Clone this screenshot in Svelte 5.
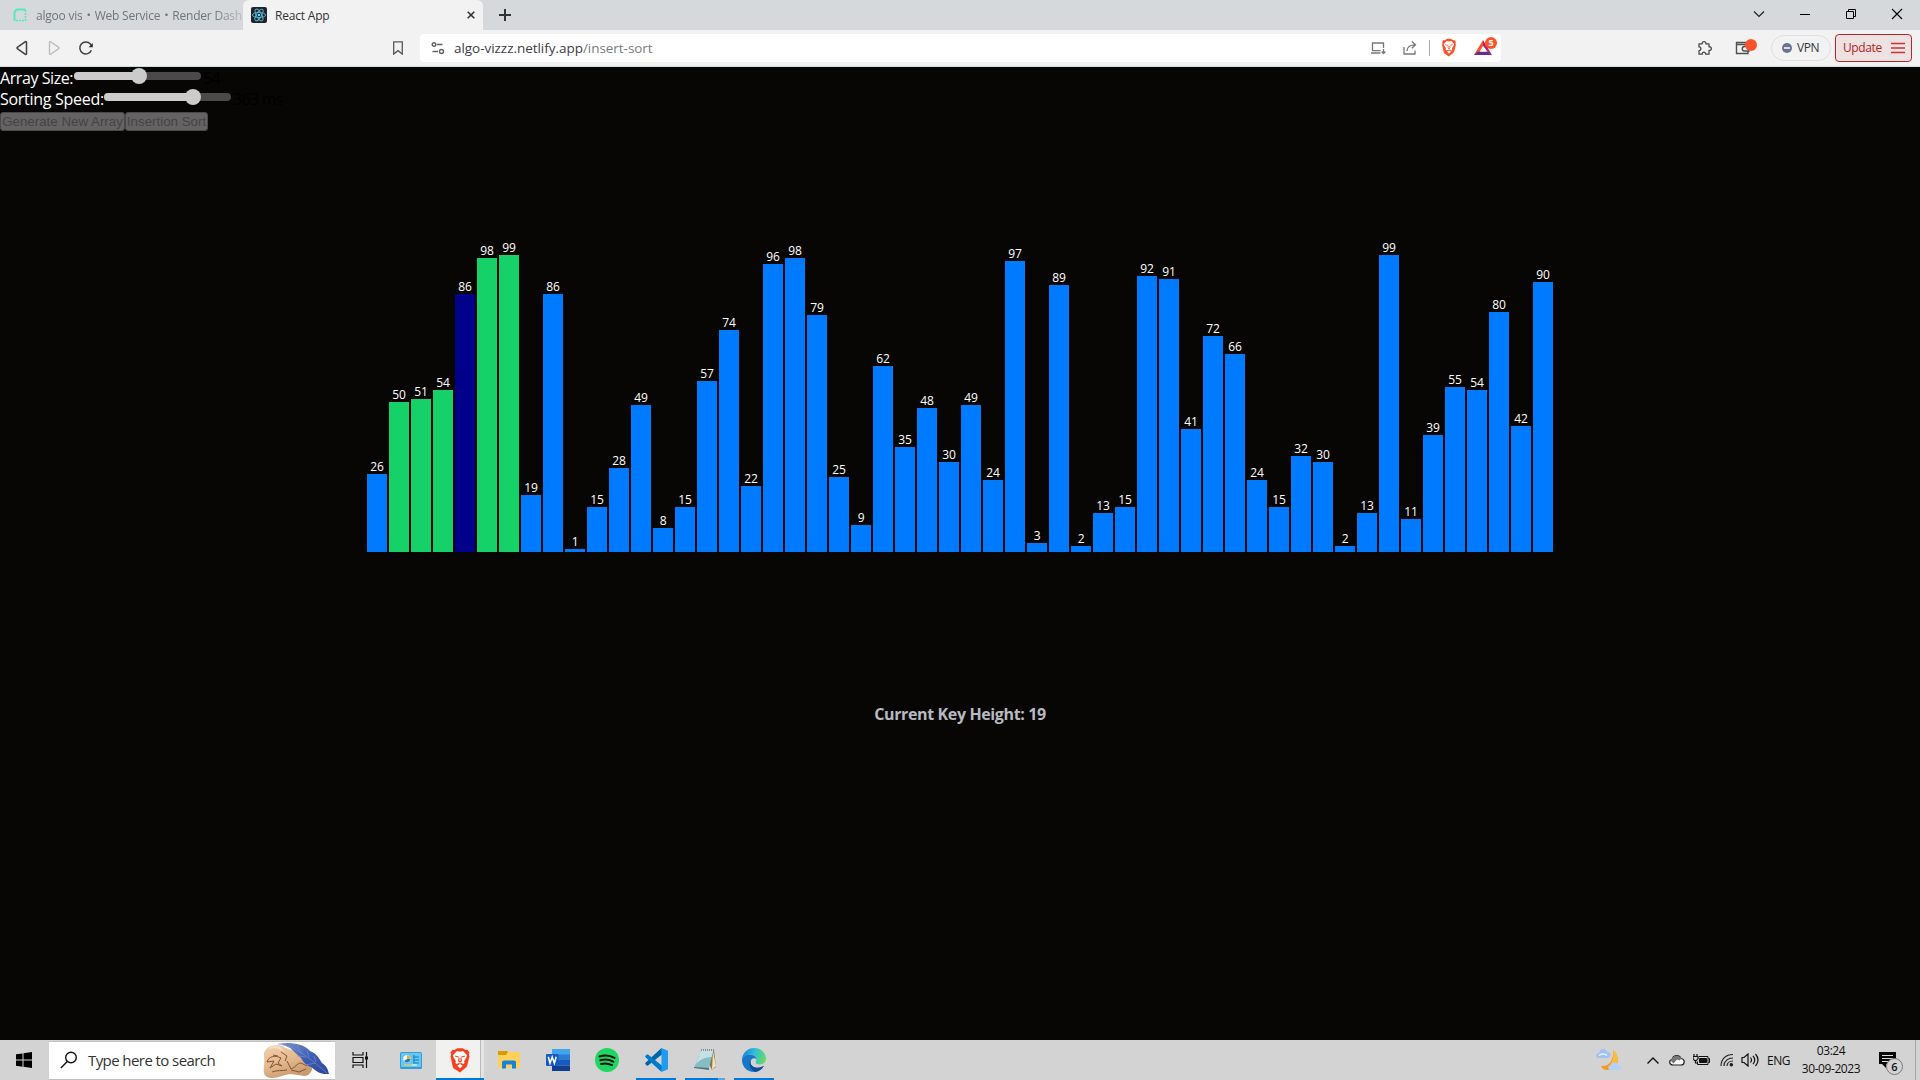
<script>
  const values = [
    26, 50, 51, 54, 86, 98, 99, 19, 86, 1, 15, 28, 49, 8, 15, 57, 74, 22, 96, 98,
    79, 25, 9, 62, 35, 48, 30, 49, 24, 97, 3, 89, 2, 13, 15, 92, 91, 41, 72, 66,
    24, 15, 32, 30, 2, 13, 99, 11, 39, 55, 54, 80, 42, 90
  ];
  const current = 4;
  const sorted = [1, 2, 3, 5, 6];
  const state = (i) => (i === current ? 'current' : sorted.includes(i) ? 'sorted' : '');
</script>

{#snippet lion()}
  <path d="M4 2.6 6.6 1h4.8L14 2.6l1.6-.2 1.8 2.4-.6 1.6.6 1.8-2 8.2c-.3 1-1 1.600-1.700 2.100L9 22.500l-4.700-3c-.8-.5-1.400-1.100-1.700-2.100L.6 8.200l.6-1.800-.6-1.600 1.800-2.400z" />
  <path class="face" d="M6.300 3.600 9 4.100l2.700-.5 3.500 3.600-.6 2.200-2 3 .5 1.600-1 1.100-2-1-1.100.4-1.100-.4-2 1-1-1.100.5-1.600-2-3-.6-2.200zM9 15.100l2.500 1.400L9 18.700l-2.500-2.200z" />
  <path class="mark" d="m4.700 8 3 .9M13.300 8l-3 .9M8.300 9.500l-.6 2.700L9 13.300l1.300-1.100-.6-2.700" />
{/snippet}

<div class="screen">
  <header class="tabs">
    <div class="tab idle">
      <svg class="favicon" width="14" height="14" viewBox="0 0 14 14"><path d="M1.500 13V5a3.500 3.500 0 0 1 3.500-3.500h7.500" fill="none" stroke="#55e9bd" stroke-width="2" /><path d="M12.500 2v10.500H2" fill="none" stroke="#55e9bd" stroke-width="1.600" stroke-dasharray="2 1" /></svg>
      <span class="title">algoo vis<i>・</i>Web Service<i>・</i>Render Dash</span>
    </div>
    <div class="tab active">
      <svg width="16" height="16" viewBox="0 0 16 16"><rect width="16" height="16" rx="2" fill="#20232a" /><g fill="none" stroke="#53b9d5" stroke-width=".9"><ellipse cx="8" cy="8" rx="6.600" ry="2.600" /><ellipse cx="8" cy="8" rx="6.600" ry="2.600" transform="rotate(60 8 8)" /><ellipse cx="8" cy="8" rx="6.600" ry="2.600" transform="rotate(120 8 8)" /></g><circle cx="8" cy="8" r="1.300" fill="#61dafb" /></svg>
      <span class="title">React App</span>
      <svg class="close" width="8" height="8" viewBox="0 0 8 8"><path d="m.7.7 6.600 6.600M7.300.7.7 7.300" stroke="#303436" stroke-width="1.600" /></svg>
    </div>
    <svg class="plus" width="12" height="12" viewBox="0 0 12 12"><path d="M6 0v12M0 6h12" stroke="#303436" stroke-width="2" /></svg>
    <div class="window">
      <svg width="46" height="28" viewBox="0 0 46 28" fill="none" stroke="#222"><path d="m18 11.500 5 5 5-5" stroke-width="1.200" /></svg>
      <svg width="46" height="28" viewBox="0 0 46 28" fill="none" stroke="#000"><path d="M18 14.500h10" /></svg>
      <svg width="46" height="28" viewBox="0 0 46 28" fill="none" stroke="#000"><path d="M18.500 11.500h7v7h-7zM20.500 11.500v-2h7v7h-2" /></svg>
      <svg width="46" height="28" viewBox="0 0 46 28" fill="none" stroke="#000"><path d="m18 9 10 10M28 9 18 19" stroke-width="1.200" /></svg>
    </div>
  </header>

  <div class="toolbar">
    <svg class="back" width="16" height="16" viewBox="0 0 16 16"><path d="M12.500 2.200c0-.6-.6-.9-1.100-.5L3.300 7.400c-.4.3-.4.9 0 1.200l8.100 5.700c.5.4 1.100.1 1.100-.5z" fill="none" stroke="#3e4143" stroke-width="1.500" /></svg>
    <svg class="forward" width="16" height="16" viewBox="0 0 16 16"><path d="M3.500 2.200c0-.6.6-.9 1.100-.5l8.100 5.700c.4.300.4.900 0 1.200l-8.100 5.700c-.5.400-1.100.1-1.100-.5z" fill="none" stroke="#bcbebf" stroke-width="1.400" /></svg>
    <svg class="reload" width="16" height="16" viewBox="0 0 16 16"><path d="M13.400 10.200A6 6 0 1 1 12.400 4l1 1.500" fill="none" stroke="#3e4143" stroke-width="1.500" /><path d="M14.800 3v4.300h-4.200z" fill="#303335" /></svg>
    <svg class="bookmark" width="12" height="14" viewBox="0 0 12 14"><path d="M1.700.8h8.600v12.300L6 9.700l-4.300 3.400z" fill="none" stroke="#55585a" stroke-width="1.300" /></svg>
    <div class="address">
      <svg width="14" height="14" viewBox="0 0 14 14" fill="none" stroke="#5e6265" stroke-width="1.400"><circle cx="3" cy="3.500" r="1.800" /><path d="M6 3.500h5.500M1.500 10.500H7" /><circle cx="10.500" cy="10.500" r="2" /></svg>
      <span class="url"><b>algo-vizzz.netlify.app</b>/insert-sort</span>
      <svg class="install" width="16" height="14" viewBox="0 0 16 14" fill="none" stroke="#74777a" stroke-width="1.300"><path d="M10.500 9.700H2.500V2h11v5M1 12h9.500M13.500 8v4.500M11.600 10.500l1.900 2 1.900-2" /></svg>
      <svg class="share" width="16" height="16" viewBox="0 0 16 16" fill="none" stroke="#74777a" stroke-width="1.300"><path d="M2 7v7h11v-3.500M5 11c0-4 3-6.200 8-6.200M9.800 1.500l3.700 3.300-3.700 3.500" /></svg>
      <i class="divider"></i>
      <svg class="brave" width="16" height="19" viewBox="0 0 18 23">{@render lion()}</svg>
      <div class="rewards">
        <svg width="18" height="16" viewBox="0 0 18 16"><path d="M9 0 0 15h4.500L9 6.500z" fill="#ff4f2b" /><path d="m9 0 9 15-4-3-5-6z" fill="#b12369" /><path d="m0 15 4-3.600h10L18 15z" fill="#662d91" /><path d="m9 6-3.400 5.600h6.800z" fill="#fff" /></svg>
        <span class="count">5</span>
      </div>
    </div>
    <svg class="puzzle" width="16" height="16" viewBox="0 0 16 16"><path d="M2 3.800h3.200c-.5-3 4.200-3 3.700 0H12v3c3.200-.4 3.200 4 0 3.600v3.800H8.600c.3-2.800-3.700-2.800-3.400 0H2v-3.500c2.500 0 2.500-3.800 0-3.800z" fill="none" stroke="#45484a" stroke-width="1.300" stroke-linejoin="round" /></svg>
    <div class="wallet">
      <svg width="16" height="14" viewBox="0 0 16 14" fill="none" stroke="#4d5052" stroke-width="1.400"><path d="M13 4V1.500H1.500v11H13V10M1.500 3.500h11M14 5.500H9.500a2 2 0 0 0 0 4.500H14z" /></svg>
      <span class="dot"></span>
    </div>
    <div class="vpn"><svg width="10" height="10" viewBox="0 0 10 10"><circle cx="5" cy="5" r="5" fill="#6b7094" /><path d="M2 5h6" stroke="#fff" stroke-width="1.500" /></svg><span>VPN</span></div>
    <div class="update"><span>Update</span><svg width="14" height="12" viewBox="0 0 14 12"><path d="M0 1.500h14M0 6h14M0 10.500h14" stroke="#c93437" stroke-width="1.300" /></svg></div>
  </div>

  <main>
    <div class="control"><label class="size" for="size">Array Size:</label>
      <svg id="size" width="127" height="16" viewBox="0 0 127 16"><rect y="4" width="127" height="8" rx="4" fill="#4b494a" /><rect y="4" width="70" height="8" rx="4" fill="#cbcbcb" /><circle cx="65" cy="8" r="8" fill="#cbcbcb" /></svg><span class="value">54</span></div>
    <div class="control"><label class="speed" for="speed">Sorting Speed:</label>
      <svg id="speed" width="127" height="16" viewBox="0 0 127 16"><rect y="4" width="127" height="8" rx="4" fill="#4b494a" /><rect y="4" width="93" height="8" rx="4" fill="#cbcbcb" /><circle cx="89" cy="8" r="8" fill="#cbcbcb" /></svg><span class="value">363 ms</span></div>
    <div class="buttons"><button class="generate" disabled>Generate New Array</button><button class="sort" disabled>Insertion Sort</button></div>
    <div class="chart">
      {#each values as v, i}
        <div class="item"><span>{v}</span><div class="bar {state(i)}" style:height="{v * 3}px"></div></div>
      {/each}
    </div>
    <p class="key">Current Key Height: 19</p>
  </main>

  <footer>
    <svg class="start" width="16" height="16" viewBox="0 0 16 16"><path d="M0 2.300 6.500 1.400v6.200H0zM7.500 1.200 16 0v7.600H7.500zM0 8.500h6.500v6.200L0 13.800zM7.500 8.500H16V16l-8.500-1.200z" /></svg>
    <div class="search">
      <svg width="18" height="18" viewBox="0 0 18 18" fill="none" stroke="#111" stroke-width="1.400"><circle cx="11" cy="6.500" r="5.300" /><path d="M7.300 10.400.8 17" /></svg>
      <span>Type here to search</span>
      <svg class="fossil" width="68" height="36" viewBox="0 0 68 36">
        <defs>
          <linearGradient id="sand" x2=".5" y2="1"><stop stop-color="#efcfae" /><stop offset=".5" stop-color="#e6bd92" /><stop offset="1" stop-color="#c89a6c" /></linearGradient>
          <linearGradient id="feather" x2="1" y2="1"><stop stop-color="#8392c9" /><stop offset=".5" stop-color="#3f60b8" /><stop offset="1" stop-color="#2c4797" /></linearGradient>
        </defs>
        <path d="M2 13C1 7 7 2 15 2c7 0 8 4 15 5 8 0 15 5 16 14 4 1 6 5 2 9-2 4-8 3-12 2-7-1-10-1-16 1C12 36 3 36 2 30c-1-4 1-8 0-17z" fill="url(#sand)" />
        <path d="M6 7c5-3 11-2 17 2l-5-5c-5-3-10 0-12 3z" fill="#f7dfc5" />
        <path d="M5 19c2-6 8-7 14-4l-3 5 4 3-6-2-6 4 4-7-7 1M19 9l6 4-2 5M10 29c5-2 10-1 15-2M25 18l4 8c4-1 6-6 10-6l6 3M29 27l8 2 7-3M11 12l5 1" fill="none" stroke="#895234" stroke-width="1" />
        <path d="M16 1c10-2 25-1 32 7 6 2 9 7 12 12 5 3 6 7 7 11l-5 0c-6-1-9-4-13-7-6-2-8-6-10-9-4-3-7-7-11-10-4-2-7-4-12-4z" fill="url(#feather)" />
        <path d="M16 1c12 2 19 6 28 12 8 6 14 11 21 17M35 3l5 8M45 8l2 6M52 13l2 6M35 13l9 1M44 22l9-2" fill="none" stroke="#7f95d2" stroke-width=".6" />
      </svg>
    </div>
    <svg class="taskview" width="17" height="16" viewBox="0 0 17 16" fill="none" stroke="#111" stroke-width="1.200"><path d="M1 0v3h10V0M1 16v-3h10v3M1 5.500h10v5H1zM14.500 0v16" /><path d="M13 4.500h3v3h-3z" fill="#111" stroke="none" /></svg>
    <svg class="panel" width="22" height="17" viewBox="0 0 22 17"><rect width="22" height="17" rx="1.500" fill="#3b9cd5" /><rect x="1" y="1" width="20" height="14" fill="#62c7f3" /><circle cx="7" cy="7" r="3.700" fill="#fff" /><path d="M7 3.300A3.700 3.700 0 0 1 10.700 7H7z" fill="#edae3a" /><path d="M7 7h3.700A3.700 3.700 0 0 1 4 9z" fill="#247dbd" /><path d="M13 5h6M13 8h6M13 11h6M14 3v8" stroke="#207fc0" stroke-width="1.100" /><path d="M4 13h8" stroke="#ffd34a" /><path d="M12 13h5" stroke="#fff" /></svg>
    <div class="app brave-app"><svg width="22" height="26" viewBox="0 0 18 23">{@render lion()}</svg></div>
    <div class="app explorer"><svg width="22" height="20" viewBox="0 0 22 20"><path d="M0 1h9l2 2v4H0z" fill="#df9900" /><path d="M0 5h8l2-3h12v16H0z" fill="#ffd15a" /><path d="M4 18.500v-6q0-2 2-2h10q2 0 2 2v6h-4v-4H8v4z" fill="#1683d8" /></svg></div>
    <div class="app word"><svg width="24" height="24" viewBox="0 0 24 24"><path d="M6 1h18v6H6z" fill="#41a5ee" /><path d="M6 6.500h18V12H6z" fill="#2b7cd3" /><path d="M6 12h18v5.500H6z" fill="#185abd" /><path d="M6 17.500h18V23H6z" fill="#103f91" /><rect y="6" width="12.500" height="12" rx="1" fill="#185abd" /><path d="m2.300 8.800 1.700 6.500 2.200-6.200 2.200 6.200 1.800-6.500" fill="none" stroke="#fff" stroke-width="1.500" /></svg></div>
    <div class="app spotify"><svg width="24" height="24" viewBox="0 0 24 24"><circle cx="12" cy="12" r="12" fill="#1ed760" /><path d="M4.500 8.500c5-1.600 10.500-1.200 15 1.400M5.300 12.300c4.500-1.300 9-.8 13 1.400M6 16c3.700-1 7.500-.6 11 1.200" fill="none" stroke="#101010" stroke-width="2" stroke-linecap="round" /></svg></div>
    <div class="app code on"><svg width="24" height="24" viewBox="0 0 24 24"><path d="m17.500 0-16 14.800c-.5.500-.5 1 0 1.400l1.300 1.200c.4.300.8.300 1.200 0L18.500 6z" fill="#0065a9" /><path d="m17.500 24-16-14.800c-.5-.5-.5-1 0-1.400l1.300-1.200c.4-.3.8-.3 1.200 0L18.500 18z" fill="#007acc" /><path d="m17.500 0 6.500 2.800v18.400L17.500 24z" fill="#1f9cf0" /></svg></div>
    <div class="app note on"><svg width="24" height="24" viewBox="0 0 24 24"><path d="M9 2h12l2 17-4 3z" fill="#8c7544" /><path d="m20 3 3 15-4 4z" fill="#eee3bc" /><path d="M8 2h12.500L16 20H1z" fill="#88bcc5" /><path d="M8 2h12.500l-2 7Q9 9 3 16z" fill="#c5e1e4" /><path d="m1 19 15 1v2L1 20z" fill="#4a7477" /><path d="M8 2h13" stroke="#6a797a" stroke-width="1.500" stroke-dasharray="1 1" /></svg></div>
    <div class="app edge on"><svg width="24" height="24" viewBox="0 0 24 24"><defs><linearGradient id="wave" y1=".3" x2="1" y2=".5"><stop stop-color="#1683d4" /><stop offset=".5" stop-color="#31bedb" /><stop offset="1" stop-color="#65dc62" /></linearGradient></defs><path d="M0 11C1 4 6 0 12 0c7 0 12 5 12 10.500 0 4-3 6-6 6-2.500 0-4.500-1-4.500-2.300 0-.8 1-1.200 1-2.700C14.500 8 10 6 6.500 7 3 7.600 1 9 0 11z" fill="url(#wave)" /><path d="M0 11c1-2.500 4-4.300 7.500-4.300 4 0 7 2 7 4.800-1-1.500-3-1.700-4.300-.8-3 2-2.500 7.500 3.300 8.800 3.500.8 6.500-.5 8.300-1.700C20 21.500 16.500 24 12 24 5 24 0 18.500 0 12z" fill="#1677c8" /><path d="M9.500 11.200C6 14 7 21 13.500 23.900c4-.5 7-3 8.300-6.100-2 1.300-5 2.500-8.300 1.700-5-1.300-6-5.500-4-8.300z" fill="#124c99" /></svg></div>
    <svg class="weather" width="26" height="24" viewBox="0 0 26 24"><path d="M17 2c8 7 6 19-5 20-3 .4-6-1-7-4 8 1 13-6 12-16z" fill="#f49b22" /><path d="M17 2c5 4 6 10 3 15-2 0-3-1-6 0 3-4 4-9 3-15z" fill="#fdbd3c" /><path d="M2 10c-3-1-2-5 1-5 1-5 7-5 8-1 4-1 5 5 1 6z" fill="#a0c1f4" /><path d="M3 7.500c2-2 6-2 8 0" fill="none" stroke="#e8f1ff" stroke-width="1.500" /><path d="M14 22c-3-1-2-5 1-5 1-4 6-3 7 0 4 0 4 5 0 5z" fill="#b4cff8" /></svg>
    <svg class="up" width="14" height="9" viewBox="0 0 14 9" fill="none" stroke="#111" stroke-width="1.400"><path d="m1.500 7.500 5.500-5.500 5.500 5.500" /></svg>
    <svg class="cloud" width="16" height="12" viewBox="0 0 16 12"><path d="M4 11c-4 0-4.500-5-.8-5.500C4 1 10 0 12 4.500c4.500.5 4 6.500 0 6.500z" fill="#f7f7f7" stroke="#222" stroke-width="1.200" /><path d="M2 7C3 1 10 0 12.500 4.500L10.500 6.500 8 5.500 4.500 9.500z" fill="#777" /></svg>
    <svg class="battery" width="17" height="14" viewBox="0 0 17 14"><path d="M1 1v3M4 1v3M0 3.500h5v2L3.500 7.500h-2L0 5.500zM2.500 7v3H5" fill="none" stroke="#111" stroke-width="1.200" /><path d="M6 3.500h9v8H4.500v-3M15.500 5.500h1v4h-1" fill="none" stroke="#111" /><path d="M6.500 5.500h7v4h-7z" fill="#111" stroke="#111" /></svg>
    <svg class="wifi" width="14" height="14" viewBox="0 0 14 14" fill="none" stroke="#222" stroke-width="1.200"><path d="M1 13C1 6 6 1.500 13 1.500M4 13c0-5 4-8 9-8M7 13c0-3 2.500-5 6-5" /><circle cx="11.300" cy="11.800" r="1.200" fill="#111" /></svg>
    <svg class="volume" width="18" height="14" viewBox="0 0 18 14" fill="none" stroke="#111" stroke-width="1.200"><path d="M1 4.500h2L7 1v12L3 9.500H1zM9.500 4.500q2 2.500 0 5M12 2.800q3.500 4.200 0 8.400M14.500 1q5 6 0 12" /></svg>
    <span class="lang">ENG</span>
    <div class="clock"><span>03:24</span><span class="date">30-09-2023</span></div>
    <div class="notice">
      <svg width="17" height="17" viewBox="0 0 17 17"><path d="M0 0h17v12H7v4l-4-4H0z" fill="#080808" /><path d="M3 3.500h11M3 6.500h11M3 9.500h8" stroke="#ddd" /></svg>
      <span>6</span>
    </div>
    <i class="desktop"></i>
  </footer>
</div>

<style>
  :global(body) { margin: 0; overflow: hidden; }
  .screen { width: 1920px; height: 1080px; display: flex; flex-direction: column; background: #070604; font-family: "Open Sans", "Noto Sans", sans-serif; white-space: nowrap; }
  .screen * { box-sizing: border-box; }
  svg { display: block; flex: none; }
  span { flex: none; }

  .tabs { height: 30px; flex: none; display: flex; align-items: center; background: #d5d9dc; font-size: 12px; }
  .tab { height: 30px; display: flex; align-items: center; }
  .idle { width: 243px; padding-left: 13px; color: #70757a; }
  .idle .title { width: 206px; display: flex; margin-left: 9px; letter-spacing: -.22px; mask-image: linear-gradient(90deg, #000 86%, rgb(0 0 0 / .25)); }
  .idle i { width: 13px; display: flex; justify-content: center; font-family: "Noto Sans CJK JP", sans-serif; font-style: normal; line-height: 16px; }
  .active { width: 240px; padding-left: 8px; border-radius: 6px 6px 0 0; background: #f2f2f2; color: #303335; }
  .active .title { width: 192px; margin-left: 8px; letter-spacing: -.2px; }
  .plus { margin-left: 16px; }
  .window { display: flex; height: 28px; align-self: flex-start; margin-left: auto; }

  .toolbar { height: 37px; flex: none; display: flex; align-items: center; padding-bottom: 1px; background: #f2f2f2; border-bottom: 1px solid #cbdce1; }
  .back { margin-left: 14px; }
  .forward { margin-left: 16px; }
  .reload { margin-left: 16px; }
  .bookmark { margin-left: 298px; }
  .address { width: 1081px; height: 28px; margin-left: 16px; padding-left: 11px; display: flex; align-items: center; border-radius: 4px; background: #fff; }
  .url { width: 911px; margin-left: 9px; font-size: 13.500px; letter-spacing: -.04px; color: #777b7e; }
  .url b { font-weight: 400; color: #3c4043; }
  .install { margin-left: 5px; }
  .share { margin-left: 16px; }
  .divider { width: 1px; height: 16px; margin-left: 11px; background: #aaa; }
  .brave { margin-left: 11px; fill: #fb542b; }
  .face { fill: #fff; }
  .mark { fill: none; stroke: #fb542b; stroke-width: 1px; }
  .rewards { position: relative; margin-left: 17px; }
  .count { position: absolute; left: 11px; top: -3px; width: 12px; height: 12px; border-radius: 6px; background: #fb542b; color: #fff; font-size: 9px; font-weight: 700; line-height: 12px; text-align: center; }
  .puzzle { margin-left: 196px; }
  .wallet { position: relative; margin-left: 22px; }
  .dot { position: absolute; left: 10px; top: -2px; width: 12px; height: 12px; border-radius: 6px; background: #fb542b; }
  .vpn { width: 60px; height: 26px; margin-left: 20px; padding-left: 10px; display: flex; align-items: center; gap: 5px; border: 1px solid #dedfe1; border-radius: 13px; color: #35383b; font-size: 12px; letter-spacing: -.4px; }
  .update { width: 77px; height: 28px; margin-left: 4px; padding: 0 6px 0 7px; display: flex; align-items: center; justify-content: space-between; border: 1px solid #bd2525; border-radius: 4px; background: #eee1e1; color: #b31e1e; font-size: 12px; letter-spacing: -.4px; }

  main { height: 973px; flex: none; padding-top: 1px; }
  .control { height: 21px; display: flex; align-items: flex-start; color: #fff; font-size: 16px; line-height: 20px; }
  .control svg { margin: 0 2px 0 1px; }
  .size { width: 73px; letter-spacing: -.42px; }
  .speed { width: 103px; letter-spacing: -.28px; }
  .value { color: #000; letter-spacing: -.7px; }
  .buttons { display: flex; margin-top: 2px; }
  button { height: 19px; padding: 0; border: 1px solid #4a4949; border-radius: 3px; background: #656364; color: #454444; font: 13.333px "Liberation Sans", Arial, sans-serif; }
  .generate { width: 125px; }
  .sort { width: 83px; }
  .chart { height: 297px; margin-top: 124px; display: flex; justify-content: center; align-items: flex-end; gap: 2px; }
  .item { width: 20px; display: flex; flex-direction: column; align-items: center; color: #fff; font-size: 12px; line-height: 14px; }
  .item span { letter-spacing: -.2px; font-weight: 500; }
  .bar { width: 20px; background: #007bff; }
  .bar.sorted { background: #16d068; }
  .bar.current { background: #00008b; }
  .key { margin: 151px 0 0; color: #b9b9c0; font-size: 16px; line-height: 22px; font-weight: 700; letter-spacing: -.37px; text-align: center; }

  footer { height: 40px; flex: none; display: flex; align-items: center; background: #d3d3d3; color: #111; }
  .start { margin-left: 16px; }
  .search { width: 286px; height: 39px; margin: 1px 0 0 17px; padding-left: 11px; display: flex; align-items: center; border: solid #c2c2c2; border-width: 1px 0; background: #fff; }
  .search svg, .search span { margin-top: -2px; }
  .search span { width: 163px; margin-left: 10px; color: #333; font-size: 15px; letter-spacing: -.58px; }
  .search .fossil { margin: 0 0 0 11px; }
  .taskview { margin-left: 17px; }
  .panel { margin-left: 31px; }
  .app { width: 40px; height: 40px; margin-left: 9px; padding-top: 2px; display: flex; align-items: center; justify-content: center; border-bottom: 2px solid transparent; }
  .on { border-bottom-color: #0078d7; }
  .brave-app { width: 48px; margin-left: 14px; padding-right: 1px; border-bottom-color: #0078d7; background: linear-gradient(90deg, #f1f1f0 44px, #b8b8b8 44px, #b8b8b8 45px, #e4e4e4 45px); fill: #f9401d; }
  .brave-app .mark { stroke: #f9401d; }
  .explorer { margin-left: 5px; }
  .note { border-image: linear-gradient(90deg, #0078d7 32px, #5aa7e4 32px) 2; border-top: 0; border-left: 0; border-right: 0; }
  .weather { margin-left: 822px; }
  .up { margin-left: 24px; }
  .cloud { margin-left: 9px; }
  .battery { margin-left: 8px; }
  .wifi { margin-left: 10px; }
  .volume { margin-left: 7px; }
  .lang { width: 23px; margin-left: 8px; font-size: 12px; letter-spacing: -.5px; }
  .clock { width: 60px; margin-left: 11px; display: flex; flex-direction: column; align-items: center; font-size: 12px; line-height: 18px; letter-spacing: -.42px; }
  .notice { position: relative; margin-left: 18px; }
  .notice span { position: absolute; left: 7px; top: 6px; width: 17px; height: 17px; border: 1px solid #777; border-radius: 9px; background: #d3d3d3; font-size: 11px; font-weight: 600; line-height: 15px; text-align: center; }
  .desktop { width: 1px; height: 40px; margin-left: 19px; background: #a5a5a5; }
</style>
